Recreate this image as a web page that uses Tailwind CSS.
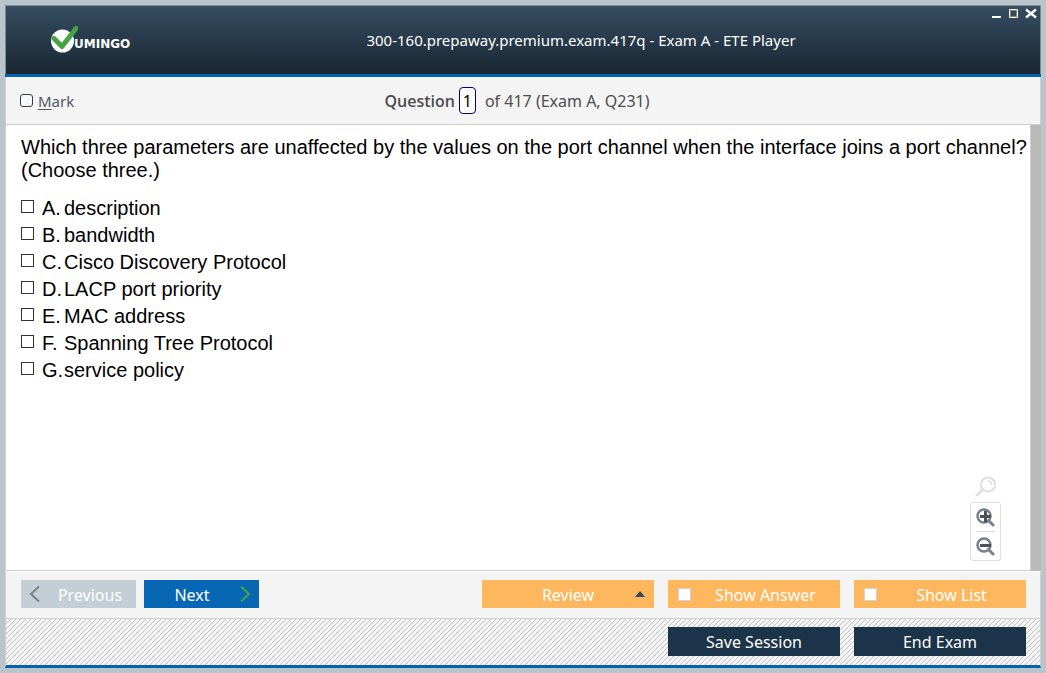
<!DOCTYPE html>
<html lang="en">
<head>
<meta charset="utf-8">
<meta name="viewport" content="width=device-width, initial-scale=1">
<title>300-160.prepaway.premium.exam.417q - Exam A - ETE Player</title>
<script src="https://cdn.jsdelivr.net/npm/@tailwindcss/browser@4"></script>
</head>
<body class="flex min-h-screen flex-col bg-[#b9c5cb] p-[5px] font-['Noto_Sans',sans-serif] text-[#4d4d4d]">
<div class="flex grow flex-col">
  <header class="relative flex h-[72px] items-center border-b-[3px] border-b-[#0461b1] bg-linear-to-b from-[#364e63] to-[#1a2733] shadow-[inset_1px_1px_0_#7d8c92,inset_-1px_0_0_#7d8c92]">
    <div class="flex w-[116px] shrink-0 items-center pl-[45px] text-white">
      <svg class="h-7 w-7 shrink-0" viewBox="0 0 28 28" aria-hidden="true">
        <circle cx="12.500" cy="15" r="11.500" fill="#fff"/>
        <path d="M4 12.500L12 20.500L26 2.500" fill="none" stroke="#45a344" stroke-width="5" stroke-linecap="round" stroke-linejoin="round"/>
      </svg>
      <span class="-ml-1 pt-2 font-['DejaVu_Sans',sans-serif] text-[12px] leading-4 font-bold">UMINGO</span>
    </div>
    <h1 class="grow pt-px text-center text-[15px] text-white">300-160.prepaway.premium.exam.417q - Exam A - ETE Player</h1>
    <div class="absolute top-[3px] right-px flex text-white">
      <button aria-label="Minimize" class="h-3 w-[17px]"><svg class="mx-auto h-3 w-[11px]" viewBox="0 0 11 12"><path d="M1 8h9v2H1z" fill="#fff"/></svg></button>
      <button aria-label="Maximize" class="h-3 w-[17px]"><svg class="mx-auto h-3 w-[11px]" viewBox="0 0 11 12"><path d="M1.500 1.500h8v8h-8z" fill="none" stroke="#fff"/><path d="M2.500 2.500h6v6h-6z" fill="none" stroke="#8d7d76"/></svg></button>
      <button aria-label="Close" class="h-3 w-[18px]"><svg class="mx-auto h-3 w-[12px]" viewBox="0 0 12 12"><path d="M1 1.500L11 9.500M11 1.500L1 9.500" fill="none" stroke="#fff" stroke-width="2.300"/></svg></button>
    </div>
  </header>

  <div class="grid h-12 grid-cols-[1fr_auto_1fr] items-center border-x border-b border-[#cfcfcf] bg-[#f4f4f4] px-[14px]">
    <label class="flex items-center gap-[5px] text-[15px]">
      <input type="checkbox" class="size-[13px] appearance-none rounded-[3px] border border-[#2d4052] bg-[#f7f7f7] checked:bg-[#2d4052]">
      <span class="pt-[2px] text-[#4d5862]"><span class="underline underline-offset-2">M</span>ark</span>
    </label>
    <div class="flex items-center pr-3 text-[16px]">
      <label for="number" class="font-['Open_Sans',sans-serif] font-semibold">Question</label>
      <input id="number" type="text" value="1" class="mr-[9px] ml-1 h-[27px] w-[17px] rounded-[4px] border border-[#000080] bg-white text-center text-black">
      <span>of 417 (Exam A, Q231)</span>
    </div>
  </div>

  <main class="flex grow border-l border-[#cfcfcf] bg-white font-['Liberation_Sans',Arial,sans-serif] text-[20px] text-black">
    <div class="relative grow border-r border-b border-[#cfcfcf] pt-[11px] pl-[15px]">
      <p class="leading-[23px]">Which three parameters are unaffected by the values on the port channel when the interface joins a port channel? (Choose three.)</p>
      <div class="mt-[13px] leading-[27px]">
        <label class="flex items-center"><input type="checkbox" class="mr-2 mb-[5px] size-[13px] appearance-none border border-[#333] checked:bg-[#333]"><span class="w-[22px]">A.</span>description</label>
        <label class="flex items-center"><input type="checkbox" class="mr-2 mb-[5px] size-[13px] appearance-none border border-[#333] checked:bg-[#333]"><span class="w-[22px]">B.</span>bandwidth</label>
        <label class="flex items-center"><input type="checkbox" class="mr-2 mb-[5px] size-[13px] appearance-none border border-[#333] checked:bg-[#333]"><span class="w-[22px]">C.</span>Cisco Discovery Protocol</label>
        <label class="flex items-center"><input type="checkbox" class="mr-2 mb-[5px] size-[13px] appearance-none border border-[#333] checked:bg-[#333]"><span class="w-[22px]">D.</span>LACP port priority</label>
        <label class="flex items-center"><input type="checkbox" class="mr-2 mb-[5px] size-[13px] appearance-none border border-[#333] checked:bg-[#333]"><span class="w-[22px]">E.</span>MAC address</label>
        <label class="flex items-center"><input type="checkbox" class="mr-2 mb-[5px] size-[13px] appearance-none border border-[#333] checked:bg-[#333]"><span class="w-[22px]">F.</span>Spanning Tree Protocol</label>
        <label class="flex items-center"><input type="checkbox" class="mr-2 mb-[5px] size-[13px] appearance-none border border-[#333] checked:bg-[#333]"><span class="w-[22px]">G.</span>service policy</label>
      </div>
      <div class="absolute right-[29px] bottom-[9px] flex w-[31px] flex-col items-center gap-1">
        <button aria-label="Reset zoom"><svg class="block size-[22px]" viewBox="0 0 22 22" fill="none" stroke="#dedede" stroke-linecap="round"><circle cx="13" cy="8.500" r="7" stroke-width="2"/><path d="M7.500 14L2 19" stroke-width="3"/><path d="M13 5Q16.500 5.500 16.500 8.500" stroke-width="1.500"/></svg></button>
        <div class="flex w-full flex-col items-center rounded-[3px] border border-[#dedede] bg-white">
          <button aria-label="Zoom in" class="w-[19px] border-b border-[#dcdcdc] pt-[5px] pb-1"><svg class="block h-[19px] w-[19px]" viewBox="0 0 19 19" fill="none"><circle cx="8" cy="8" r="6.500" stroke="#73828f" stroke-width="2.500"/><path d="M12.500 12.500L17 17" stroke="#73828f" stroke-width="3" stroke-linecap="round"/><path d="M4 8.500h11M9.500 3v11" stroke="#505050" stroke-width="3"/></svg></button>
          <button aria-label="Zoom out" class="w-[19px] pt-[5px] pb-1"><svg class="block h-[19px] w-[19px]" viewBox="0 0 19 19" fill="none"><circle cx="8" cy="8" r="6.500" stroke="#73828f" stroke-width="2.500"/><path d="M12.500 12.500L17 17" stroke="#73828f" stroke-width="3" stroke-linecap="round"/><path d="M4 8.500h11" stroke="#505050" stroke-width="3"/></svg></button>
        </div>
      </div>
    </div>
    <div class="w-[10px] shrink-0 bg-[#bbb9b5]"></div>
  </main>

  <div class="flex h-12 items-center border-x border-t border-b border-x-[#cfcfcf] border-t-white border-b-[#cfcfcf] bg-[#f4f4f4] pr-[14px] pb-[2px] pl-[15px] text-[16px] text-white">
    <button class="flex h-7 w-[115px] items-center bg-[#c3ced7] pl-2">
      <svg class="h-4 w-[11px]" viewBox="0 0 11 16" fill="none" stroke="#75818d" stroke-width="2"><path d="M10 .500L2 8L10 15.500"/></svg>
      <span class="grow pt-[2px] pl-1 text-center">Previous</span>
    </button>
    <button class="ml-2 flex h-7 w-[115px] items-center bg-[#0867b5] pr-2">
      <span class="grow pt-[2px] text-center">Next</span>
      <svg class="h-4 w-[11px]" viewBox="0 0 11 16" fill="none" stroke="#45a344" stroke-width="2"><path d="M1 .500L9 8L1 15.500"/></svg>
    </button>
    <div class="ml-auto flex gap-[14px]">
      <button class="relative h-7 w-[172px] bg-[#ffb75d] pt-[2px] text-center">Review
        <svg class="absolute top-[11px] right-[9px] h-[6px] w-[10px]" viewBox="0 0 10 6"><path d="M5 0L10 6H0z" fill="#30475c"/></svg>
      </button>
      <label class="flex h-7 w-[172px] items-center bg-[#ffb75d] pr-1 pl-[10px]"><input type="checkbox" class="size-[13px] appearance-none border border-[#d2d2d2] bg-white checked:bg-[#30475c]"><span class="grow pt-[2px] pl-1 text-center">Show Answer</span></label>
      <label class="flex h-7 w-[172px] items-center bg-[#ffb75d] pr-1 pl-[10px]"><input type="checkbox" class="size-[13px] appearance-none border border-[#d2d2d2] bg-white checked:bg-[#30475c]"><span class="grow pt-[2px] pl-1 text-center">Show List</span></label>
    </div>
  </div>

  <footer class="relative flex h-[49px] items-center justify-end gap-[14px] border-x border-b-[3px] border-x-[#cfcfcf] border-b-[#0461b1] bg-[#f5f5f5] px-[14px] pb-[2px] text-[16px] text-white">
    <svg class="absolute inset-0 h-full w-full" aria-hidden="true" shape-rendering="crispEdges">
      <defs><pattern id="hatch" width="5" height="5" patternUnits="userSpaceOnUse"><path d="M4 0h1v1h-1zM3 1h1v1h-1zM2 2h1v1h-1zM1 3h1v1h-1zM0 4h1v1h-1z" fill="#c1c1c1"/></pattern></defs>
      <rect width="100%" height="100%" fill="url(#hatch)"/>
    </svg>
    <button class="relative h-[29px] w-[172px] bg-[#1b344a] pt-[2px]">Save Session</button>
    <button class="relative h-[29px] w-[172px] bg-[#1b344a] pt-[2px]">End Exam</button>
  </footer>
</div>
</body>
</html>
